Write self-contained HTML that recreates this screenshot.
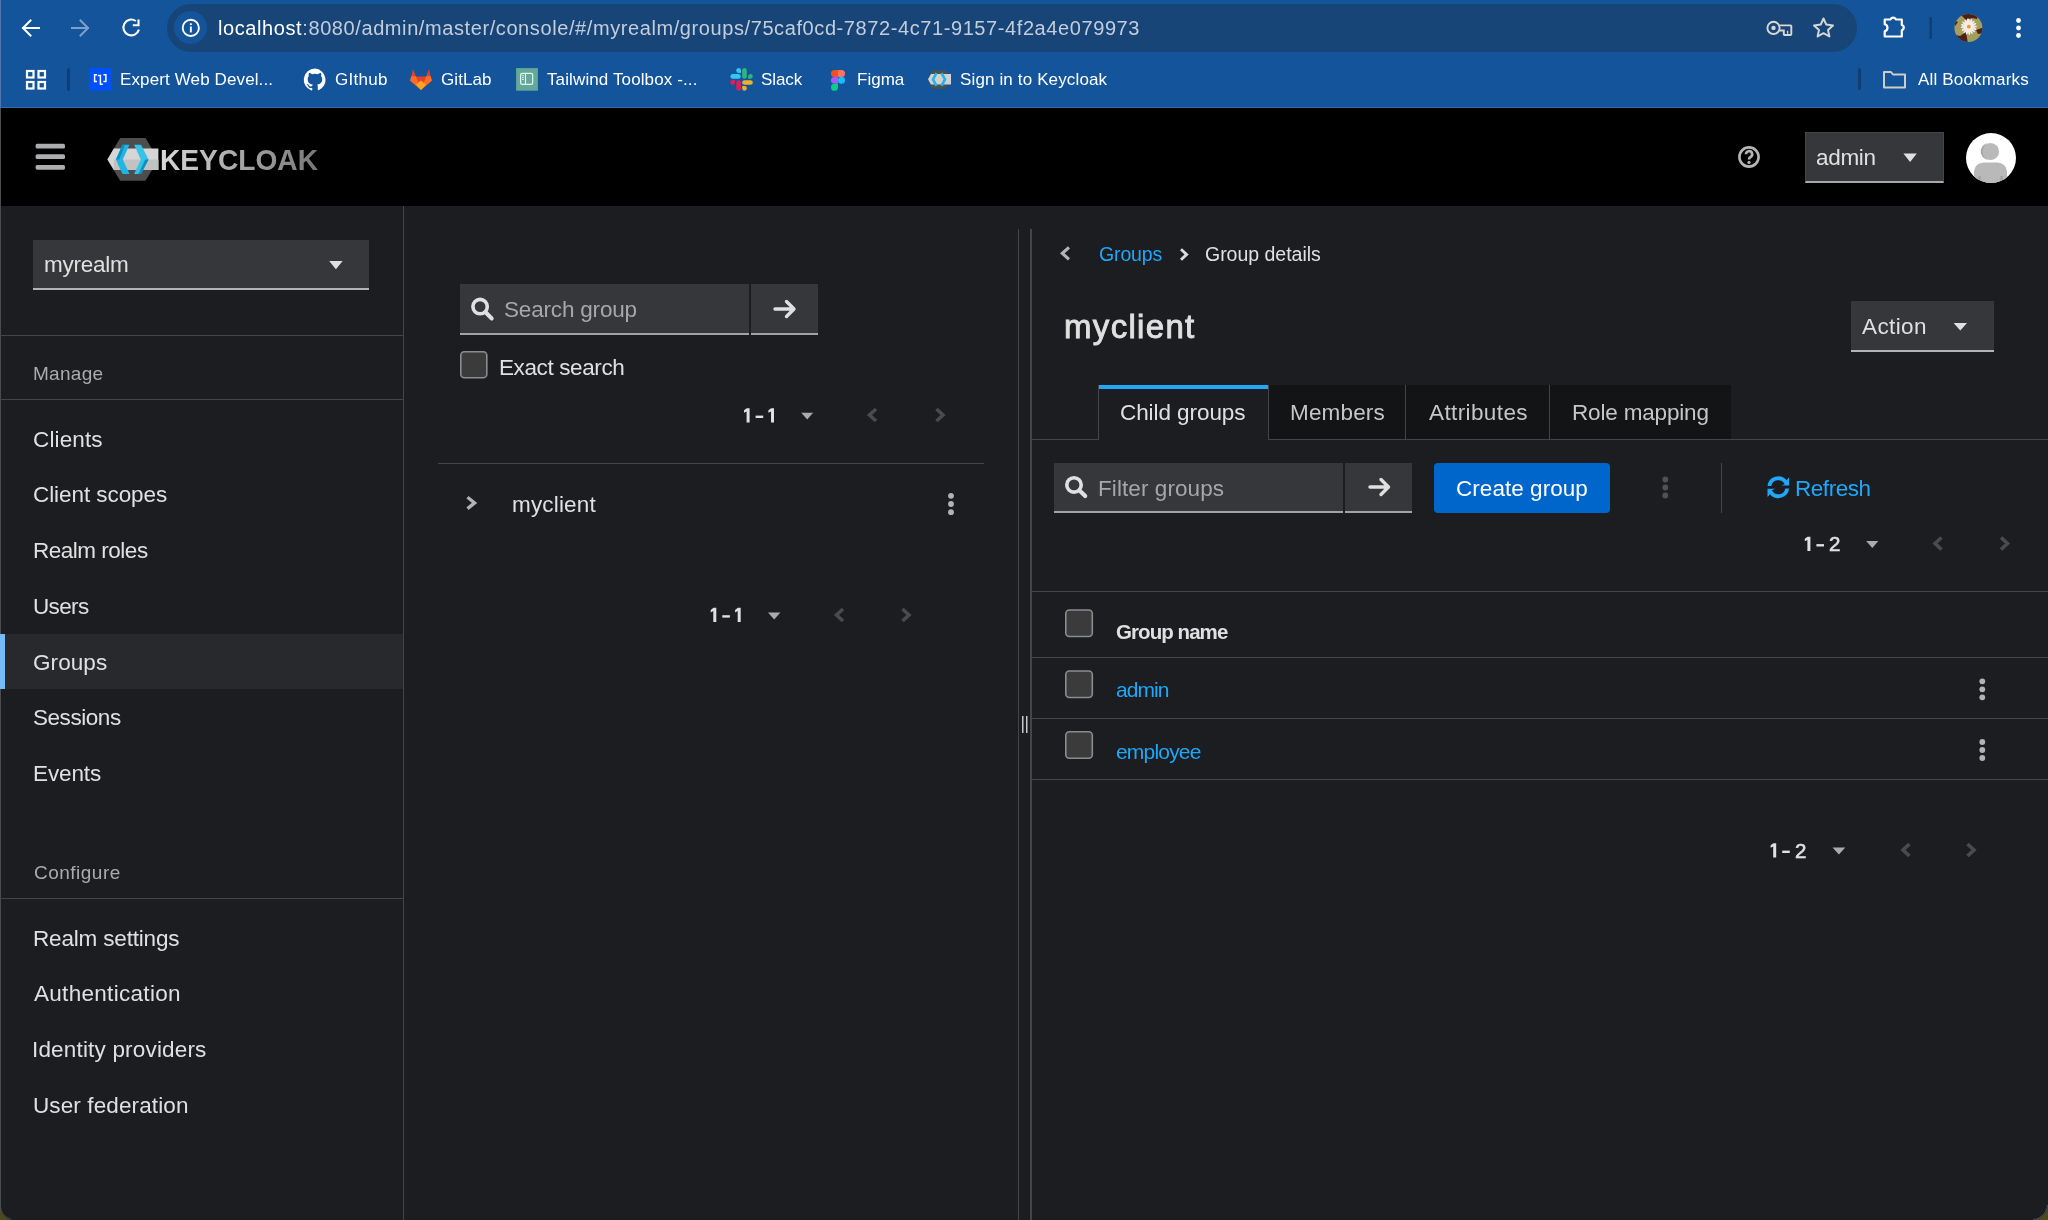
<!DOCTYPE html>
<html><head><meta charset="utf-8"><title>Keycloak Administration Console</title>
<style>
*{box-sizing:border-box;margin:0;padding:0}
html,body{width:2048px;height:1220px;overflow:hidden;background:#1b1d21;font-family:"Liberation Sans",sans-serif}
.a{position:absolute}
.t{position:absolute;will-change:transform;white-space:pre;line-height:1.149;font-family:"Liberation Sans",sans-serif}
svg{position:absolute;overflow:visible}
</style></head><body>
<!-- ===== Browser chrome ===== -->
<div class="a" style="left:0;top:0;width:2048px;height:108px;background:#13549b"></div>
<div class="a" style="left:0;top:107px;width:2048px;height:1px;background:#3a6aa8"></div>
<div class="a" style="left:167px;top:4px;width:1690px;height:48px;border-radius:24px;background:#184577"></div>
<div class="a" style="left:174px;top:11px;width:33px;height:33px;border-radius:50%;background:#13549b"></div>
<!-- back -->
<svg style="left:0;top:0" width="2048" height="108">
  <g fill="none" stroke="#ffffff" stroke-width="2" stroke-linecap="square">
    <path d="M23 28 H39 M30.5 20.5 L23 28 L30.5 35.5"/>
  </g>
  <g fill="none" stroke="#7d9fcc" stroke-width="2" stroke-linecap="square">
    <path d="M72 28 H88 M80.5 20.5 L88 28 L80.5 35.5"/>
  </g>
  <path d="M138.9 29.6 A7.9 7.9 0 1 1 135.8 21" fill="none" stroke="#ffffff" stroke-width="2.1"/>
  <path d="M132.8 25.3 H138.5 V19.4" fill="none" stroke="#ffffff" stroke-width="2.1"/>
  <!-- info icon -->
  <circle cx="190.8" cy="27.9" r="8.1" fill="none" stroke="#fff" stroke-width="1.9"/>
  <rect x="189.9" y="26.5" width="1.9" height="5.9" fill="#fff"/>
  <rect x="189.9" y="23.3" width="1.9" height="1.8" fill="#fff"/>
  <!-- key -->
  <g fill="none" stroke="#d9d6d3" stroke-width="1.9">
    <circle cx="1773.5" cy="27.9" r="6.1"/>
    <path d="M1779.4 25.4 H1790.4 A0.9 0.9 0 0 1 1791.3 26.3 V34.1 A0.9 0.9 0 0 1 1790.4 35 H1784.7 A0.9 0.9 0 0 1 1783.8 34.1 V30.5 H1779.4"/>
  </g>
  <path d="M1787.6 30.8 V33.8" stroke="#d9d6d3" stroke-width="1.3"/>
  <circle cx="1773.5" cy="27.9" r="2.2" fill="#d9d6d3"/>
  <!-- star -->
  <path d="M1823.5 18.5 L1826.3 24.6 L1833 25.4 L1828 29.9 L1829.4 36.5 L1823.5 33.2 L1817.6 36.5 L1819 29.9 L1814 25.4 L1820.7 24.6 Z" fill="none" stroke="#d6d6d6" stroke-width="2" stroke-linejoin="round"/>
  <!-- extension puzzle -->
  <path d="M1884.7 19.5 H1890.6 A2.7 2.7 0 0 1 1895.8 19.5 H1901.8 V25 A2.7 2.7 0 0 1 1901.8 30.2 V36.5 H1884.7 V31.2 A3.6 3.6 0 0 0 1884.7 24.2 Z" fill="none" stroke="#ffffff" stroke-width="2.2" stroke-linejoin="round"/>
  <rect x="1929.5" y="17" width="2.5" height="22" rx="1" fill="#123d73"/>
  <!-- profile avatar -->
  <clipPath id="pav"><circle cx="1968.4" cy="28" r="14"/></clipPath>
  <circle cx="1968.4" cy="28" r="14" fill="#a39d5e"/>
  <g clip-path="url(#pav)" fill="#4e1f1a">
    <path d="M1960 12 L1979 12 L1977 19 L1972 18 L1966 20 L1962 16 Z"/>
    <path d="M1952 34 L1960 36 L1966 32 L1968 44 L1952 44 Z"/>
    <path d="M1976 30 L1984 27 L1984 33 L1978 34 Z"/>
    <path d="M1953 20 L1958 22 L1955 26 Z"/>
  </g>
  <g fill="#f7eeea"><ellipse cx="1968.8" cy="22.6" rx="1.1" ry="4.1" transform="rotate(0 1968.8 26.7)"/><ellipse cx="1968.8" cy="22.6" rx="1.1" ry="4.1" transform="rotate(22 1968.8 26.7)"/><ellipse cx="1968.8" cy="22.6" rx="1.1" ry="4.1" transform="rotate(44 1968.8 26.7)"/><ellipse cx="1968.8" cy="22.6" rx="1.1" ry="4.1" transform="rotate(66 1968.8 26.7)"/><ellipse cx="1968.8" cy="22.6" rx="1.1" ry="4.1" transform="rotate(88 1968.8 26.7)"/><ellipse cx="1968.8" cy="22.6" rx="1.1" ry="4.1" transform="rotate(110 1968.8 26.7)"/><ellipse cx="1968.8" cy="22.6" rx="1.1" ry="4.1" transform="rotate(132 1968.8 26.7)"/><ellipse cx="1968.8" cy="22.6" rx="1.1" ry="4.1" transform="rotate(154 1968.8 26.7)"/><ellipse cx="1968.8" cy="22.6" rx="1.1" ry="4.1" transform="rotate(176 1968.8 26.7)"/><ellipse cx="1968.8" cy="22.6" rx="1.1" ry="4.1" transform="rotate(198 1968.8 26.7)"/><ellipse cx="1968.8" cy="22.6" rx="1.1" ry="4.1" transform="rotate(220 1968.8 26.7)"/><ellipse cx="1968.8" cy="22.6" rx="1.1" ry="4.1" transform="rotate(242 1968.8 26.7)"/><ellipse cx="1968.8" cy="22.6" rx="1.1" ry="4.1" transform="rotate(264 1968.8 26.7)"/><ellipse cx="1968.8" cy="22.6" rx="1.1" ry="4.1" transform="rotate(286 1968.8 26.7)"/><ellipse cx="1968.8" cy="22.6" rx="1.1" ry="4.1" transform="rotate(308 1968.8 26.7)"/><ellipse cx="1968.8" cy="22.6" rx="1.1" ry="4.1" transform="rotate(330 1968.8 26.7)"/><ellipse cx="1968.8" cy="22.6" rx="1.1" ry="4.1" transform="rotate(352 1968.8 26.7)"/></g>
  <circle cx="1968.8" cy="26.7" r="1.9" fill="#f39a1e"/>
  <!-- menu dots -->
  <circle cx="2018.5" cy="20.5" r="2.4" fill="#fff"/>
  <circle cx="2018.5" cy="28" r="2.4" fill="#fff"/>
  <circle cx="2018.5" cy="35.5" r="2.4" fill="#fff"/>
  <!-- bookmarks bar icons -->
  <g fill="none" stroke="#ffffff" stroke-width="2.2">
    <rect x="27" y="71" width="6.5" height="6.5"/><rect x="38.5" y="71" width="6.5" height="6.5"/>
    <rect x="27" y="82" width="6.5" height="6.5"/><rect x="38.5" y="82" width="6.5" height="6.5"/>
  </g>
  <rect x="67" y="68" width="3" height="23" rx="1.5" fill="#123d73"/>
  <rect x="89" y="68" width="22.8" height="22.7" fill="#0050fb"/>
  <path d="M97 74.8 H94.6 V81.6 H97 M103.4 74.8 H105.9 V81.6 H103.4 M97.8 75.6 H100.4 V84.2 H102.8" stroke="#fff" stroke-width="1.5" fill="none"/>
  <!-- github -->
  <path d="M315 68.5 a11.3 11.3 0 0 0 -3.6 22 c0.6 0.1 0.8 -0.2 0.8 -0.6 v-2 c-3.1 0.7 -3.8 -1.5 -3.8 -1.5 c-0.5 -1.3 -1.3 -1.7 -1.3 -1.7 c-1 -0.7 0.1 -0.7 0.1 -0.7 c1.1 0.1 1.7 1.2 1.7 1.2 c1 1.7 2.7 1.2 3.3 0.9 c0.1 -0.7 0.4 -1.2 0.7 -1.5 c-2.5 -0.3 -5.2 -1.3 -5.2 -5.6 c0 -1.2 0.4 -2.2 1.2 -3 c-0.1 -0.3 -0.5 -1.4 0.1 -3 c0 0 0.9 -0.3 3.1 1.2 a10.8 10.8 0 0 1 5.7 0 c2.2 -1.5 3.1 -1.2 3.1 -1.2 c0.6 1.6 0.2 2.7 0.1 3 c0.7 0.8 1.2 1.8 1.2 3 c0 4.3 -2.6 5.3 -5.2 5.6 c0.4 0.4 0.8 1 0.8 2 v3 c0 0.3 0.2 0.7 0.8 0.6 A11.3 11.3 0 0 0 315 68.5 z" fill="#ffffff"/>
  <!-- gitlab -->
  <path d="M421 90 L410 80.5 L411.5 76 L413 69 L416 76.5 H426 L429 69 L430.5 76 L432 80.5 Z" fill="#e24329"/>
  <path d="M421 90 L410 80.5 L411.5 76 L416 76.5 Z M421 90 L432 80.5 L430.5 76 L426 76.5 Z" fill="#fc6d26"/>
  <path d="M421 90 L416 84.5 L421 80.5 L426 84.5 Z" fill="#fca326"/>
  <!-- tailwind toolbox -->
  <rect x="516.1" y="68.1" width="21.8" height="22.6" fill="#62a99a"/>
  <rect x="520.6" y="73.3" width="12.1" height="11.1" rx="1.6" fill="none" stroke="#e3f5f0" stroke-width="1.2"/>
  <path d="M525.5 73.3 V84.4" stroke="#e3f5f0" stroke-width="1.2"/>
  <path d="M522 75.4 H523.9 M522 77.5 H523.9 M522 79.5 H523.9" stroke="#e3f5f0" stroke-width="0.9"/>
  <!-- slack -->
  <g stroke-linecap="round" stroke-width="4.6">
    <path d="M732.7 76.4 H738.4" stroke="#36c5f0"/>
    <path d="M744.5 70.4 V76.4" stroke="#2eb67d"/>
    <path d="M738.6 82.5 V88.4" stroke="#e01e5a"/>
    <path d="M744.5 82.5 H750.5" stroke="#ecb22e"/>
  </g>
  <path d="M741 72.9 H738.7 A2.4 2.4 0 1 1 741 70.5 Z" fill="#36c5f0"/>
  <path d="M748.1 78.7 V76.4 A2.35 2.35 0 1 1 750.5 78.7 Z" fill="#2eb67d"/>
  <path d="M735 80.1 V82.5 A2.4 2.4 0 1 1 732.7 80.1 Z" fill="#e01e5a"/>
  <path d="M742.2 86 H744.5 A2.35 2.35 0 1 1 742.2 88.4 Z" fill="#ecb22e"/>
  <!-- figma -->
  <path d="M834.4 69.9 H838 V76.9 H834.4 A3.5 3.5 0 0 1 834.4 69.9 Z" fill="#f24e1e"/>
  <path d="M838 69.9 H841.5 A3.5 3.5 0 0 1 841.5 76.9 H838 Z" fill="#ff7262"/>
  <path d="M834.4 76.9 H838 V83.8 H834.4 A3.45 3.45 0 0 1 834.4 76.9 Z" fill="#a259ff"/>
  <circle cx="841.5" cy="80.35" r="3.5" fill="#1abcfe"/>
  <path d="M834.4 83.8 H838 V87.2 A3.5 3.5 0 1 1 834.4 83.8 Z" fill="#0acf83"/>
  <!-- keycloak favicon -->
  <path d="M932.5 70.2 H945.5 L950.5 79.4 L945.5 88.7 H932.5 L927.8 79.4 Z" fill="#4f4f4f"/>
  <path d="M931 74 H951 V84.6 H931 L928 79.3 Z" fill="#d2d2d2"/>
  <path d="M936.5 73 L933 79.4 L936.5 85.8" stroke="#1fb6e6" stroke-width="2.6" fill="none"/>
  <path d="M941.5 73 L945 79.4 L941.5 85.8" stroke="#1fb6e6" stroke-width="2.6" fill="none"/>
  <rect x="1858" y="68" width="3" height="22" rx="1.5" fill="#123d73"/>
  <path d="M1884 72 H1891 L1893 74.5 H1905 V87.5 H1884 Z" fill="none" stroke="#d0ccc8" stroke-width="2" stroke-linejoin="round"/>
</svg>

<!-- ===== Masthead ===== -->
<div class="a" style="left:0;top:108px;width:2048px;height:98px;background:#000"></div>
<div class="a" style="left:0;top:0;width:1px;height:107px;background:#4f78b2"></div>
<div class="a" style="left:0;top:108px;width:1px;height:1112px;background:#4a4b4e"></div>
<svg style="left:0;top:0;will-change:transform" width="2048" height="210">
  <g fill="#acadae">
    <rect x="35.6" y="143.8" width="29.4" height="4.8" rx="1.6"/>
    <rect x="35.6" y="154.2" width="29.4" height="4.8" rx="1.6"/>
    <rect x="35.6" y="164.9" width="29.4" height="4.8" rx="1.6"/>
  </g>
  <!-- keycloak logo -->
  <path d="M120.2 138 H145.5 L158.3 159.4 L145.5 180.8 H120.2 L107.4 159.4 Z" fill="#4d4d4d"/>
  <path d="M113.8 148.5 H158.4 V170 H113.8 L107.4 159.4 Z" fill="#d6d6d6"/>
  <path d="M113.8 159.4 H158.4 V170 H113.8 Z" fill="#c2c2c2"/>
  <path d="M122.5 144.8 H129.5 L122.8 159.4 L129.5 173.9 H122.5 L115.9 159.4 Z" fill="#1fb5e5"/>
  <path d="M115.9 159.4 L122.5 144.8 H125 L119.3 159.4 Z" fill="#0d8fc0"/>
  <path d="M141 144.8 H134.1 L140.8 159.4 L134.1 173.9 H141 L148.6 159.4 Z" fill="#35c3ea"/>
  <path d="M148.6 159.4 L141 173.9 H138.5 L145.2 159.4 Z" fill="#0d8fc0"/>
  <defs>
    <linearGradient id="kcg" x1="161" y1="0" x2="318" y2="0" gradientUnits="userSpaceOnUse">
      <stop offset="0" stop-color="#d8d8d8"/><stop offset="1" stop-color="#777777"/>
    </linearGradient>
  </defs>
  <text x="160" y="170" font-family="Liberation Sans" font-weight="700" font-size="29.5" fill="url(#kcg)" textLength="158" lengthAdjust="spacingAndGlyphs">KEYCLOAK</text>
  <!-- help -->
  <circle cx="1749" cy="157" r="9.6" fill="none" stroke="#b5b5b5" stroke-width="2.6"/>
  <path d="M1746 154.3 A3.1 3.1 0 1 1 1750.6 157 Q1749 157.8 1749 159.6" fill="none" stroke="#b5b5b5" stroke-width="2.7"/>
  <circle cx="1749" cy="162.4" r="1.6" fill="#b5b5b5"/>
</svg>
<!-- admin dropdown -->
<div class="a" style="left:1805px;top:132px;width:139px;height:51px;background:#36373a;border:1px solid #45464a;border-bottom:2px solid #a8a9ab"></div>
<svg style="left:0;top:0" width="2048" height="210">
  <path d="M1903.4 153.5 H1916.8 L1910.1 162 Z" fill="#e0e0e0"/>
  <circle cx="1991" cy="158" r="25" fill="#ffffff"/>
  <clipPath id="avc"><circle cx="1991" cy="158" r="25"/></clipPath>
  <g clip-path="url(#avc)">
    <circle cx="1990.5" cy="151.5" r="8.6" fill="#b9b9b9"/>
    <path d="M1988 143 A8.6 8.6 0 0 0 1988 160 A9.5 9.5 0 0 1 1988 143 Z" fill="#a5a5a5"/>
    <path d="M1974 184 V171 Q1975 163 1984 162.5 H1997 Q2006 163 2007 171 V184 Z" fill="#b9b9b9"/>
    <path d="M1979.5 184 V176 M2001.5 184 V176" stroke="#a3a3a3" stroke-width="2.5"/>
  </g>
</svg>

<!-- ===== Sidebar ===== -->
<div class="a" style="left:403px;top:206px;width:1px;height:1014px;background:#444548"></div>
<div class="a" style="left:33px;top:240px;width:336px;height:50px;background:#36373a;border-bottom:2px solid #b2b3b5"></div>
<svg style="left:0;top:0" width="410" height="300"><path d="M329.2 261 H342.6 L335.9 269.2 Z" fill="#e0e0e0"/></svg>
<div class="a" style="left:0;top:335px;width:403px;height:1px;background:#444548"></div>
<div class="a" style="left:0;top:399px;width:403px;height:1px;background:#444548"></div>
<div class="a" style="left:0;top:634px;width:403px;height:55px;background:#27292d"></div>
<div class="a" style="left:0;top:634px;width:5px;height:55px;background:#73bcf7"></div>
<div class="a" style="left:0;top:898px;width:403px;height:1px;background:#444548"></div>

<!-- ===== Middle panel ===== -->
<div class="a" style="left:460px;top:284px;width:289px;height:51px;background:#36373a;border-bottom:2px solid #a2a3a5"></div>
<div class="a" style="left:751px;top:284px;width:67px;height:51px;background:#36373a;border-bottom:2px solid #a2a3a5"></div>
<svg style="left:0;top:0" width="1040" height="1220">
  <!-- search icon -->
  <circle cx="480.1" cy="306.6" r="7.2" fill="none" stroke="#e0e0e0" stroke-width="3.6"/>
  <path d="M485.6 312.2 L491.6 318.4" stroke="#e0e0e0" stroke-width="4.2" stroke-linecap="round"/>
  <!-- arrow -->
  <path d="M775 309 H793 M786.5 301.5 L794 309 L786.5 316.5" fill="none" stroke="#e0e0e0" stroke-width="3.4" stroke-linecap="round" stroke-linejoin="round"/>
  <!-- checkbox -->
  <rect x="460.8" y="351.8" width="26" height="26" rx="3.5" fill="#3b3b3b" stroke="#8b8c8e" stroke-width="1.6"/>
  <!-- pagination top -->
  <path d="M801.3 412.7 H813.1 L807.2 419.5 Z" fill="#aaabac"/>
  <path d="M876 409 L869.5 415 L876 421" fill="none" stroke="#494b4f" stroke-width="3.6"/>
  <path d="M936.5 409 L943 415 L936.5 421" fill="none" stroke="#494b4f" stroke-width="3.6"/>
  <!-- row -->
  <path d="M467.5 497.2 L474.6 502.9 L467.5 508.6" fill="none" stroke="#b3b3b3" stroke-width="3.3"/>
  <circle cx="951" cy="495.8" r="2.9" fill="#b3b3b3"/>
  <circle cx="951" cy="504" r="2.9" fill="#b3b3b3"/>
  <circle cx="951" cy="512.2" r="2.9" fill="#b3b3b3"/>
  <!-- pagination bottom -->
  <path d="M768 612.5 H780.4 L774.2 619.5 Z" fill="#aaabac"/>
  <path d="M843 609 L836.5 615 L843 621" fill="none" stroke="#494b4f" stroke-width="3.6"/>
  <path d="M902.5 609 L909 615 L902.5 621" fill="none" stroke="#494b4f" stroke-width="3.6"/>
  <!-- splitter grip -->
  <rect x="1022" y="716" width="1.5" height="17" fill="#c7c7c7"/>
  <rect x="1026" y="716" width="1.5" height="17" fill="#c7c7c7"/>
</svg>
<div class="a" style="left:438px;top:463px;width:546px;height:1px;background:#444548"></div>
<div class="a" style="left:1018px;top:229px;width:1px;height:991px;background:#444548"></div>

<!-- ===== Right panel ===== -->
<div class="a" style="left:1030px;top:229px;width:2px;height:991px;background:#444548"></div>
<svg style="left:0;top:0" width="2048" height="1220">
  <path d="M1069 247.3 L1062.3 253.3 L1069 259.3" fill="none" stroke="#b5b5b5" stroke-width="3.1"/>
  <path d="M1181 249.3 L1186.6 254.5 L1181 259.7" fill="none" stroke="#dcdcdc" stroke-width="2.9"/>
</svg>
<!-- Action -->
<div class="a" style="left:1851px;top:301px;width:143px;height:51px;background:#36373a;border-bottom:2px solid #b2b3b5"></div>
<svg style="left:0;top:0" width="2048" height="400"><path d="M1953.6 322.9 H1967 L1960.3 330.4 Z" fill="#e0e0e0"/></svg>
<!-- tabs -->
<div class="a" style="left:1031px;top:439px;width:1017px;height:1px;background:#444548"></div>
<div class="a" style="left:1098px;top:385px;width:171px;height:55px;background:#1b1d21;border-left:1px solid #444548;border-right:1px solid #444548"></div>
<div class="a" style="left:1099px;top:385px;width:169px;height:4px;background:#1fa7f8"></div>
<div class="a" style="left:1269px;top:385px;width:137px;height:54px;background:#131416;border-right:1px solid #444548"></div>
<div class="a" style="left:1406px;top:385px;width:144px;height:54px;background:#131416;border-right:1px solid #444548"></div>
<div class="a" style="left:1550px;top:385px;width:181px;height:54px;background:#131416"></div>
<!-- toolbar -->
<div class="a" style="left:1054px;top:463px;width:289px;height:50px;background:#36373a;border-bottom:2px solid #a2a3a5"></div>
<div class="a" style="left:1345px;top:463px;width:67px;height:50px;background:#36373a;border-bottom:2px solid #a2a3a5"></div>
<div class="a" style="left:1434px;top:463px;width:176px;height:50px;background:#0066cc;border-radius:4px"></div>
<div class="a" style="left:1721px;top:463px;width:1px;height:50px;background:#444548"></div>
<svg style="left:0;top:0" width="2048" height="1220">
  <circle cx="1074" cy="484.9" r="7.2" fill="none" stroke="#e0e0e0" stroke-width="3.6"/>
  <path d="M1079.5 490.4 L1085.2 496.1" stroke="#e0e0e0" stroke-width="4.2" stroke-linecap="round"/>
  <path d="M1370 487 H1388 M1381 479.5 L1388.5 487 L1381 494.5" fill="none" stroke="#e0e0e0" stroke-width="3.4" stroke-linecap="round" stroke-linejoin="round"/>
  <circle cx="1665.3" cy="479.5" r="2.9" fill="#4f5155"/>
  <circle cx="1665.3" cy="487.5" r="2.9" fill="#4f5155"/>
  <circle cx="1665.3" cy="495.5" r="2.9" fill="#4f5155"/>
  <!-- refresh -->
  <path d="M1767.5 486 A10.9 10.9 0 0 1 1786.65 480.2 L1789.1 477.3 V485.6 H1781.4 L1784.7 484.2 A7.1 7.1 0 0 0 1771.3 486 Z" fill="#1fa7f8"/>
  <path d="M1789.1 488.4 A10.9 10.9 0 0 1 1769.95 494.2 L1767.5 497.1 V488.8 H1775.2 L1771.9 490.2 A7.1 7.1 0 0 0 1785.3 488.4 Z" fill="#1fa7f8"/>
  <!-- pagination -->
  <path d="M1866.2 541 H1878.4 L1872.3 548 Z" fill="#aaabac"/>
  <path d="M1941.5 537.5 L1935 543.5 L1941.5 549.5" fill="none" stroke="#494b4f" stroke-width="3.6"/>
  <path d="M2001 537.5 L2007.5 543.5 L2001 549.5" fill="none" stroke="#494b4f" stroke-width="3.6"/>
  <!-- checkboxes -->
  <rect x="1065.8" y="610" width="26.5" height="26.5" rx="3.5" fill="#3b3b3b" stroke="#8b8c8e" stroke-width="1.6"/>
  <rect x="1065.8" y="671" width="26.5" height="26.5" rx="3.5" fill="#3b3b3b" stroke="#8b8c8e" stroke-width="1.6"/>
  <rect x="1065.8" y="731.8" width="26.5" height="26.5" rx="3.5" fill="#3b3b3b" stroke="#8b8c8e" stroke-width="1.6"/>
  <!-- kebabs -->
  <circle cx="1982.3" cy="681.3" r="2.9" fill="#b3b3b3"/>
  <circle cx="1982.3" cy="689.3" r="2.9" fill="#b3b3b3"/>
  <circle cx="1982.3" cy="697.3" r="2.9" fill="#b3b3b3"/>
  <circle cx="1982.3" cy="742" r="2.9" fill="#b3b3b3"/>
  <circle cx="1982.3" cy="750" r="2.9" fill="#b3b3b3"/>
  <circle cx="1982.3" cy="758" r="2.9" fill="#b3b3b3"/>
  <!-- bottom pagination -->
  <path d="M1832.5 847.5 H1845.3 L1838.9 854.5 Z" fill="#aaabac"/>
  <path d="M1909.5 844 L1903 850 L1909.5 856" fill="none" stroke="#494b4f" stroke-width="3.6"/>
  <path d="M1967.5 844 L1974 850 L1967.5 856" fill="none" stroke="#494b4f" stroke-width="3.6"/>
</svg>
<div class="a" style="left:1031px;top:591px;width:1017px;height:1px;background:#444548"></div>
<div class="a" style="left:1031px;top:657px;width:1017px;height:1px;background:#444548"></div>
<div class="a" style="left:1031px;top:718px;width:1017px;height:1px;background:#444548"></div>
<div class="a" style="left:1031px;top:779px;width:1017px;height:1px;background:#444548"></div>

<div class="t" style="left:217.70px;top:17.10px;font-size:20px;color:#ffffff;letter-spacing:0.591px;">localhost<span style="color:#c3cddb">:8080/admin/master/console/#/myrealm/groups/75caf0cd-7872-4c71-9157-4f2a4e079973</span></div>
<div class="t" style="left:119.70px;top:69.61px;font-size:17px;color:#ffffff;letter-spacing:0.120px;">Expert Web Devel...</div>
<div class="t" style="left:335.00px;top:69.61px;font-size:17px;color:#ffffff;letter-spacing:0.284px;">GIthub</div>
<div class="t" style="left:441.00px;top:69.61px;font-size:17px;color:#ffffff;letter-spacing:0.074px;">GitLab</div>
<div class="t" style="left:547.00px;top:69.61px;font-size:17px;color:#ffffff;letter-spacing:0.119px;">Tailwind Toolbox -...</div>
<div class="t" style="left:761.30px;top:69.61px;font-size:17px;color:#ffffff;letter-spacing:-0.093px;">Slack</div>
<div class="t" style="left:856.70px;top:69.61px;font-size:17px;color:#ffffff;letter-spacing:0.006px;">Figma</div>
<div class="t" style="left:959.60px;top:69.61px;font-size:17px;color:#ffffff;letter-spacing:0.140px;">Sign in to Keycloak</div>
<div class="t" style="left:1917.80px;top:69.61px;font-size:17px;color:#ffffff;letter-spacing:0.172px;">All Bookmarks</div>
<div class="t" style="left:1816.00px;top:144.64px;font-size:22.5px;color:#e0e0e0;letter-spacing:-0.317px;">admin</div>
<div class="t" style="left:44.20px;top:252.04px;font-size:22.5px;color:#e0e0e0;letter-spacing:-0.252px;">myrealm</div>
<div class="t" style="left:33.40px;top:362.81px;font-size:19px;color:#aaabac;letter-spacing:0.281px;">Manage</div>
<div class="t" style="left:33.10px;top:426.54px;font-size:22.5px;color:#e0e0e0;letter-spacing:0.129px;">Clients</div>
<div class="t" style="left:33.10px;top:482.29px;font-size:22.5px;color:#e0e0e0;letter-spacing:-0.068px;">Client scopes</div>
<div class="t" style="left:33.10px;top:538.04px;font-size:22.5px;color:#e0e0e0;letter-spacing:-0.489px;">Realm roles</div>
<div class="t" style="left:33.10px;top:593.79px;font-size:22.5px;color:#e0e0e0;letter-spacing:-0.651px;">Users</div>
<div class="t" style="left:33.10px;top:649.54px;font-size:22.5px;color:#e0e0e0;letter-spacing:0.073px;">Groups</div>
<div class="t" style="left:33.10px;top:705.29px;font-size:22.5px;color:#e0e0e0;letter-spacing:-0.449px;">Sessions</div>
<div class="t" style="left:33.10px;top:761.04px;font-size:22.5px;color:#e0e0e0;letter-spacing:-0.127px;">Events</div>
<div class="t" style="left:33.70px;top:861.80px;font-size:19px;color:#aaabac;letter-spacing:0.486px;">Configure</div>
<div class="t" style="left:32.70px;top:925.94px;font-size:22.5px;color:#e0e0e0;letter-spacing:-0.174px;">Realm settings</div>
<div class="t" style="left:33.70px;top:981.04px;font-size:22.5px;color:#e0e0e0;letter-spacing:0.301px;">Authentication</div>
<div class="t" style="left:32.40px;top:1037.14px;font-size:22.5px;color:#e0e0e0;letter-spacing:0.178px;">Identity providers</div>
<div class="t" style="left:32.70px;top:1092.94px;font-size:22.5px;color:#e0e0e0;letter-spacing:0.113px;">User federation</div>
<div class="t" style="left:503.60px;top:297.14px;font-size:22.5px;color:#a6a7a9;letter-spacing:-0.179px;">Search group</div>
<div class="t" style="left:499.00px;top:355.44px;font-size:22.5px;color:#e0e0e0;letter-spacing:-0.386px;">Exact search</div>
<div class="t" style="left:512.00px;top:491.74px;font-size:22.5px;color:#e0e0e0;letter-spacing:0.176px;">myclient</div>
<div class="t" style="left:1099.00px;top:243.45px;font-size:19.5px;color:#1fa7f8;letter-spacing:-0.139px;">Groups</div>
<div class="t" style="left:1205.00px;top:243.45px;font-size:19.5px;color:#e0e0e0;letter-spacing:-0.019px;">Group details</div>
<div class="t" style="left:1064.00px;top:307.94px;font-size:33px;color:#e0e0e0;letter-spacing:1.320px;-webkit-text-stroke:0.9px #e0e0e0;">myclient</div>
<div class="t" style="left:1862.10px;top:313.74px;font-size:22.5px;color:#e0e0e0;letter-spacing:0.376px;">Action</div>
<div class="t" style="left:1120.30px;top:400.04px;font-size:22.5px;color:#e0e0e0;letter-spacing:-0.070px;">Child groups</div>
<div class="t" style="left:1289.50px;top:400.04px;font-size:22.5px;color:#c6c6c7;letter-spacing:0.164px;">Members</div>
<div class="t" style="left:1429.30px;top:400.04px;font-size:22.5px;color:#c6c6c7;letter-spacing:0.390px;">Attributes</div>
<div class="t" style="left:1572.30px;top:400.04px;font-size:22.5px;color:#c6c6c7;letter-spacing:-0.175px;">Role mapping</div>
<div class="t" style="left:1097.90px;top:475.64px;font-size:22.5px;color:#a6a7a9;letter-spacing:0.084px;">Filter groups</div>
<div class="t" style="left:1455.80px;top:475.64px;font-size:22.5px;color:#ffffff;letter-spacing:0.044px;">Create group</div>
<div class="t" style="left:1794.60px;top:475.64px;font-size:22.5px;color:#1fa7f8;letter-spacing:-0.445px;">Refresh</div>
<div class="t" style="left:1828.70px;top:532.45px;font-size:20.5px;color:#e0e0e0;-webkit-text-stroke:0.6px #e0e0e0;">2</div>
<div class="t" style="left:1115.50px;top:619.95px;font-size:20.5px;color:#e0e0e0;font-weight:700;letter-spacing:-0.937px;">Group name</div>
<div class="t" style="left:1115.50px;top:678.29px;font-size:21px;color:#1fa7f8;letter-spacing:-0.929px;">admin</div>
<div class="t" style="left:1115.50px;top:739.50px;font-size:21px;color:#1fa7f8;letter-spacing:-0.811px;">employee</div>
<div class="t" style="left:1794.50px;top:838.95px;font-size:20.5px;color:#e0e0e0;-webkit-text-stroke:0.6px #e0e0e0;">2</div>
<svg style="left:0;top:0" width="2048" height="1220"><path d="M746.60 422.50 V411.50 L744.00 412.80 V410.30 L746.80 408.20 H749.60 V422.50 Z" fill="#e0e0e0"/><rect x="755.60" y="415.60" width="7.6" height="2.4" fill="#e0e0e0"/><path d="M771.00 422.50 V411.50 L768.40 412.80 V410.30 L771.20 408.20 H774.00 V422.50 Z" fill="#e0e0e0"/><path d="M713.30 622.10 V611.10 L710.70 612.40 V609.90 L713.50 607.80 H716.30 V622.10 Z" fill="#e0e0e0"/><rect x="722.30" y="615.20" width="7.6" height="2.4" fill="#e0e0e0"/><path d="M737.70 622.10 V611.10 L735.10 612.40 V609.90 L737.90 607.80 H740.70 V622.10 Z" fill="#e0e0e0"/><path d="M1807.40 551.00 V540.00 L1804.80 541.30 V538.80 L1807.60 536.70 H1810.40 V551.00 Z" fill="#e0e0e0"/><rect x="1816.40" y="544.10" width="7.6" height="2.4" fill="#e0e0e0"/><path d="M1773.20 857.50 V846.50 L1770.60 847.80 V845.30 L1773.40 843.20 H1776.20 V857.50 Z" fill="#e0e0e0"/><rect x="1782.20" y="850.60" width="7.6" height="2.4" fill="#e0e0e0"/></svg>
<svg style="left:0;top:0" width="2048" height="1220">
  <path d="M0 1207 A13 13 0 0 0 11 1220 H0 Z" fill="#4d4a1c"/>
  <path d="M0.5 1207 A13 13 0 0 0 11 1219.5" fill="none" stroke="#4a4b4e" stroke-width="1.2"/>
  <path d="M2048 1205 A15 15 0 0 1 2033 1220 H2048 Z" fill="#4d4a1c"/>
  <path d="M2047.5 1205 A15 15 0 0 1 2033 1219.5" fill="none" stroke="#4a4b4e" stroke-width="1.2"/>
</svg>
</body></html>
